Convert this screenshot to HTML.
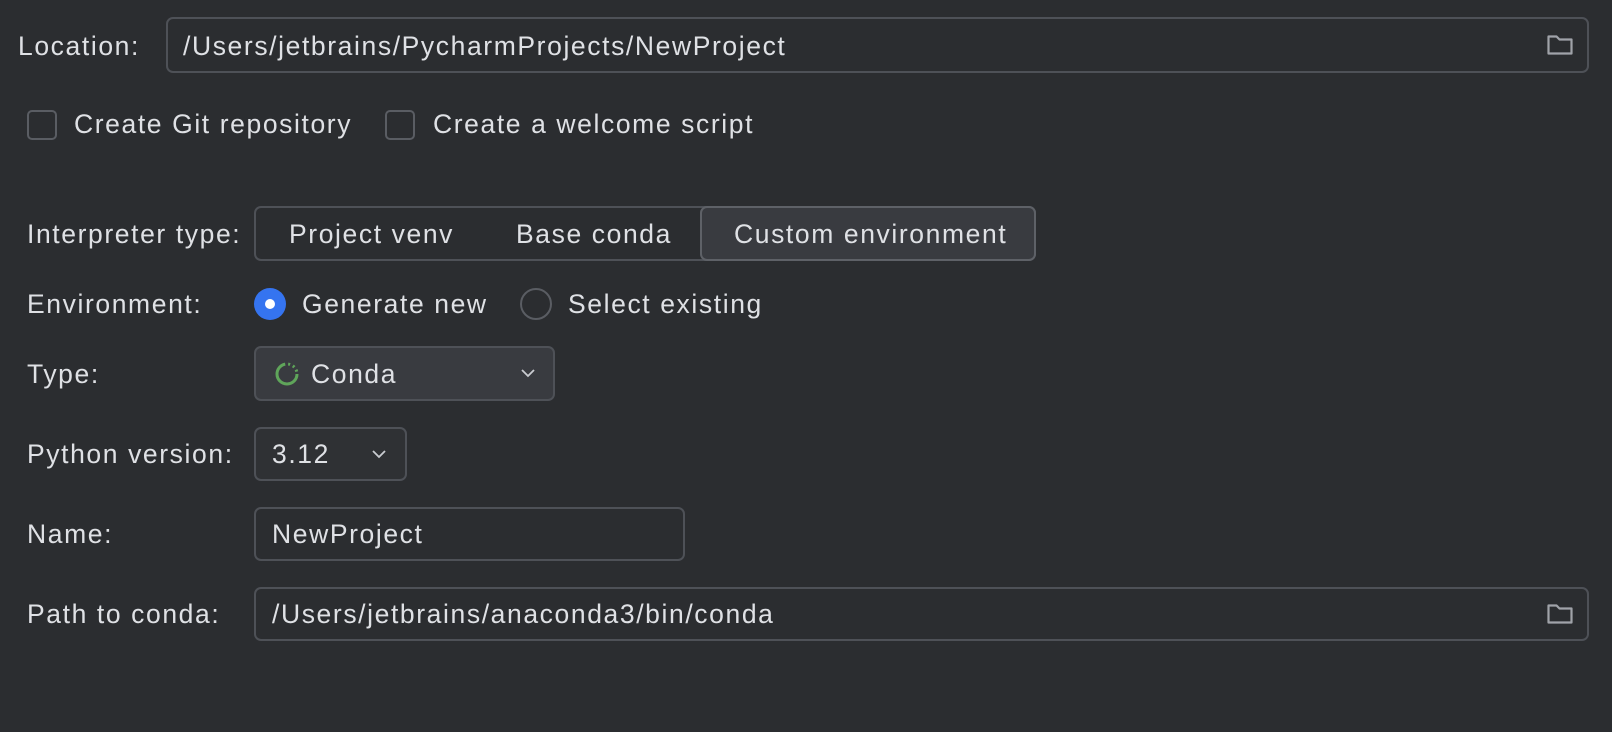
<!DOCTYPE html>
<html><head><style>
body{margin:0;width:1612px;height:732px;background:#2b2d30;font-family:"Liberation Sans",sans-serif;font-size:26.5px;letter-spacing:1.6px;color:#dfe1e5;position:relative;overflow:hidden}
.a{position:absolute;white-space:nowrap;line-height:30px}
.f{position:absolute;box-sizing:border-box;border:2px solid #4e5157;border-radius:7px}
.cb{position:absolute;box-sizing:border-box;border:2px solid #5a5d63;border-radius:5px;width:30px;height:30px}
</style></head><body>
<div class="a" style="left:18px;top:31px">Location:</div>
<div class="f" style="left:166px;top:17px;width:1423px;height:56px"></div>
<div class="a" style="left:183px;top:31px">/Users/jetbrains/PycharmProjects/NewProject</div>
<svg class="a" style="left:1546px;top:32px" width="28" height="26" viewBox="0 0 28 26"><path d="M2.5 4.5h8l3 3h12v14h-23z" fill="none" stroke="#a0a3a9" stroke-width="2.2" stroke-linejoin="round"/></svg>

<div class="cb" style="left:27px;top:110px"></div>
<div class="a" style="left:74px;top:109px">Create Git repository</div>
<div class="cb" style="left:385px;top:110px"></div>
<div class="a" style="left:433px;top:109px">Create a welcome script</div>

<div class="a" style="left:27px;top:219px">Interpreter type:</div>
<div class="f" style="left:254px;top:206px;width:782px;height:55px"></div>
<div class="f" style="left:700px;top:206px;width:336px;height:55px;background:#393b40;border-color:#5e6167"></div>
<div class="a" style="left:289px;top:219px">Project venv</div>
<div class="a" style="left:516px;top:219px">Base conda</div>
<div class="a" style="left:734px;top:219px">Custom environment</div>

<div class="a" style="left:27px;top:289px">Environment:</div>
<div style="position:absolute;left:254px;top:288px;width:32px;height:32px;border-radius:50%;background:#3574f0"></div>
<div style="position:absolute;left:265px;top:299px;width:10px;height:10px;border-radius:50%;background:#fff"></div>
<div class="a" style="left:302px;top:289px">Generate new</div>
<div style="position:absolute;left:520px;top:288px;width:32px;height:32px;border-radius:50%;box-sizing:border-box;border:2px solid #5a5d63"></div>
<div class="a" style="left:568px;top:289px">Select existing</div>

<div class="a" style="left:27px;top:359px">Type:</div>
<div class="f" style="left:254px;top:346px;width:301px;height:55px;background:#393b40;border-color:#4e5157"></div>
<svg class="a" style="left:274px;top:361px" width="26" height="26" viewBox="0 0 26 26"><circle cx="13" cy="13" r="10" fill="none" stroke="#5fa55a" stroke-width="3" stroke-dasharray="45 3 2 3 2 3 2 3"/></svg>
<div class="a" style="left:311px;top:359px">Conda</div>
<svg class="a" style="left:520px;top:368px" width="16" height="10" viewBox="0 0 16 10"><path d="M2 2l6 6 6-6" fill="none" stroke="#c9ccd1" stroke-width="1.8"/></svg>

<div class="a" style="left:27px;top:439px">Python version:</div>
<div class="f" style="left:254px;top:427px;width:153px;height:54px;background:#2f3134"></div>
<div class="a" style="left:272px;top:439px">3.12</div>
<svg class="a" style="left:371px;top:449px" width="16" height="10" viewBox="0 0 16 10"><path d="M2 2l6 6 6-6" fill="none" stroke="#c9ccd1" stroke-width="1.8"/></svg>

<div class="a" style="left:27px;top:519px">Name:</div>
<div class="f" style="left:254px;top:507px;width:431px;height:54px"></div>
<div class="a" style="left:272px;top:519px">NewProject</div>

<div class="a" style="left:27px;top:599px">Path to conda:</div>
<div class="f" style="left:254px;top:587px;width:1335px;height:54px"></div>
<div class="a" style="left:272px;top:599px">/Users/jetbrains/anaconda3/bin/conda</div>
<svg class="a" style="left:1546px;top:601px" width="28" height="26" viewBox="0 0 28 26"><path d="M2.5 4.5h8l3 3h12v14h-23z" fill="none" stroke="#a0a3a9" stroke-width="2.2" stroke-linejoin="round"/></svg>
</body></html>
